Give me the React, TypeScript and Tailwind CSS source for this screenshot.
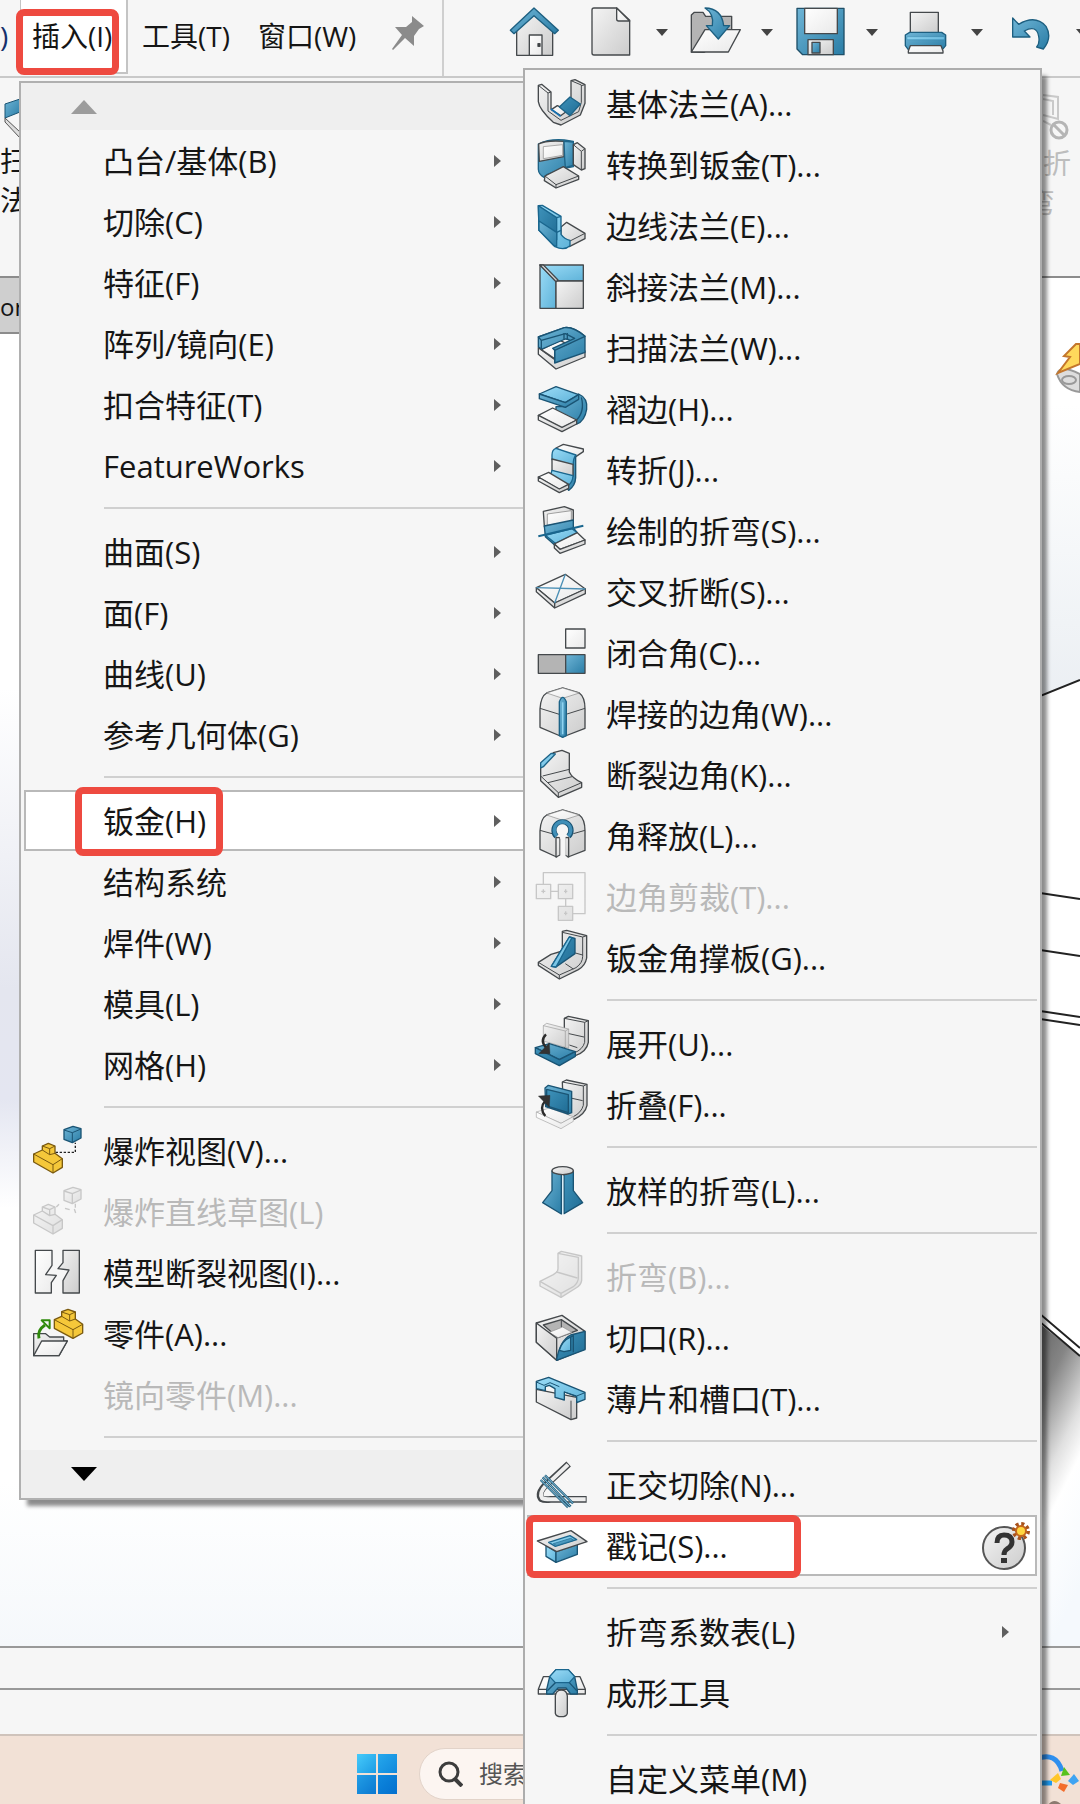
import { clsx } from "clsx";

type Shape = [fill: string, d: string, stroke?: string, width?: number, dash?: string];

const INK = "#45494c";
const GREEN = "#2f8a0b";

const paint: Record<string, string> = {
  n: "none",
  w: "url(#paper)",
  g: "url(#steel)",
  m: "#b4b4b4",
  b: "url(#blue)",
  d: "url(#deep)",
  l: "url(#sky)",
  y: "#f5c83a",
  k: "#333333",
  bg: "#f6f6f6",
};

// every icon is drawn on a 150 x 150 grid
const icons: Record<string, Shape[]> = {
  home: [
    ["g", "M20 66 72 18 128 66V145H20Z"],
    ["b", "M1 70 72 3 145 70 134 80 72 26 12 80Z", "#1d5f80"],
    ["w", "M58 84H96V145H58Z"],
    ["k", "M84 110H90V118H84Z"],
  ],
  file: [
    ["g", "M24 3H92L131 40V144H24Q18 144 18 138V9Q18 3 24 3Z"],
    ["w", "M92 3V36Q92 42 98 42H131Z"],
  ],
  open: [
    ["m", "M1 135V24L10 16H36L44 28H122V72L40 136Z"],
    ["w", "M1 135 42 68H148L112 135Z"],
    ["b", "M42 3Q92 4 98 56H116L82 96 46 56H64Q70 20 42 3Z", "#1d5f80"],
  ],
  save: [
    ["b", "M3 4H144V143H20L3 126Z", "#1f4f68"],
    ["w", "M26 4H124V80H26Z"],
    ["g", "M36 98H112V143H36Z"],
    ["b", "M48 106H72V138H48Z"],
  ],
  print: [
    ["g", "M28 16H112V78H28Z"],
    ["b", "M13 84 26 76H122L134 84V116L124 128H22L13 116Z", "#1d5f80"],
    ["l", "M18 90H130V98H18Z", "#2d7fa8", 1],
    ["w", "M22 132 28 116H120L126 132V138H22Z"],
  ],
  undo: [
    ["b", "M20 33V90H72L55 72Q92 52 98 88Q102 108 92 120L112 126Q140 92 120 58Q88 22 38 52Z", "#1d5f80"],
  ],
  baseFlange: [
    ["g", "M7 19 17 16 45 39V90L75 108 105 68V5L117 2 147 17V73L133 108 75 138 52 130Q10 92 7 68Z"],
    ["n", "M7 19 36 42V96L75 124 128 98 136 70V18L105 5M36 42 45 39M136 20 147 17", INK, 3],
    ["w", "M46 92 64 80 96 94 74 110Z"],
    ["d", "M70 84 102 54 133 75 102 110Z", "#1d6387"],
    ["n", "M45 90 74 112", "#1673b5", 5],
  ],
  convert: [
    ["b", "M7 12Q40 -4 85 0L112 4V80L90 84 32 104 24 112Q8 104 7 88Z", "#1d6387"],
    ["g", "M8 12Q30 0 84 4V50L10 64Z"],
    ["w", "M22 20 80 14V46L22 56Z", "#8a8a8a", 2],
    ["b", "M84 4 112 6V76L88 82 86 54Z", "#1d6387"],
    ["g", "M112 14 124 8 147 26V86L136 90 112 74Z"],
    ["n", "M136 34V90M112 14 136 34 147 26", INK, 3],
    ["g", "M27 108 82 80 128 108V118L60 144 25 122Z"],
    ["n", "M27 108 60 134 128 108M60 134V144", INK, 3],
  ],
  edgeFlange: [
    ["g", "M75 78 92 64 147 97V113L100 137 75 110Z"],
    ["n", "M147 97 102 120", INK, 3],
    ["l", "M7 14 19 13 75 46V100Q85 114 102 118V134Q85 150 57 137L9 88Z", "#1a668e"],
    ["d", "M7 14 62 50V116Q26 92 9 88Z", "#1a668e"],
    ["b", "M9 60 62 94V136L54 134 9 88Z", "#1a668e"],
    ["n", "M62 94 75 88M62 50 75 46", "#1a668e"],
  ],
  miter: [
    ["l", "M12 9H142V57H62Z"],
    ["l", "M12 9 60 57V139H12Z"],
    ["g", "M60 57H142V139H60Z"],
    ["g", "M12 9H22L66 54 60 59Z"],
  ],
  sweptFlange: [
    ["g", "M7 74 60 112 147 84V102L60 138 7 94Z"],
    ["w", "M16 80 72 52 108 70 60 110Z"],
    ["b", "M7 42 85 14Q112 10 147 40V88L56 120V80L104 60Q104 48 88 48L18 78 7 72Z", "#1a5474"],
    ["b", "M7 42 85 14Q112 10 147 40L56 82 50 76 116 46 88 32 16 52Z", "#1a5474"],
    ["n", "M16 52V78M56 80V120M84 30V50M94 30V50", "#1a5474"],
  ],
  hem: [
    ["b", "M60 68 90 68 128 30Q156 42 152 76Q146 112 122 120L98 100 60 84Z", "#1a5474"],
    ["n", "M136 40Q148 84 118 112", "#1a5474"],
    ["l", "M10 30 60 8 128 32 88 56Z", "#1a5474"],
    ["b", "M10 30 88 56 128 32V46L88 70 10 44Z", "#1a5474"],
    ["w", "M7 94 50 72 122 108 78 132Z"],
    ["g", "M7 94 78 130 122 108V120L78 143 7 108Z"],
  ],
  jog: [
    ["w", "M60 9 82 -2 142 12V20L115 38Z"],
    ["b", "M110 44 119 32V98Q118 122 98 136L88 124Q110 110 110 90Z", "#1a5474"],
    ["l", "M48 30Q48 14 60 10L120 30Q111 40 112 60L48 44Z", "#1a668e"],
    ["g", "M48 42 111 58V94L48 78Z"],
    ["l", "M48 76 111 92Q110 112 96 122L40 92Q46 88 48 76Z", "#1a668e"],
    ["w", "M7 96 38 82 98 118 70 134Z"],
    ["g", "M7 96 70 132 98 118V130L70 143 7 108Z"],
  ],
  sketchedBend: [
    ["g", "M22 16 85 2 112 12V50L25 62Z"],
    ["w", "M34 24 106 14V46L34 58Z", "#777777", 2],
    ["b", "M25 60 112 42V66L124 80 55 116 28 92Z", "#1a5474"],
    ["l", "M28 88 108 68 124 80 58 112Z", "#1a668e"],
    ["n", "M7 91 142 59", "#1a668e", 6],
    ["w", "M55 114 124 80 147 102 72 130Z"],
    ["g", "M55 114 72 130 147 102V114L72 142 55 126Z"],
  ],
  crossBreak: [
    ["w", "M1 62 88 22 148 66 56 108Z"],
    ["g", "M1 62 56 108 148 66V80L56 123 1 74Z"],
    ["n", "M56 108V122"],
    ["n", "M1 62 148 66M88 22 56 108", "#4a8fb5", 4],
  ],
  closedCorner: [
    ["w", "M89 3H147V60H89Z"],
    ["m", "M7 80H89V136H7Z"],
    ["b", "M89 80H147V136H89Z"],
  ],
  weldedCorner: [
    ["g", "M12 60Q14 22 32 12L80 -3 130 12Q147 24 147 60V118L80 144 12 115Z"],
    ["w", "M32 12 80 -3 130 12 80 28Z", "#888888", 2],
    ["n", "M12 58 70 76M90 76 147 58", INK, 3],
    ["b", "M70 38Q80 12 91 38V140L80 145 70 140Z", "#1d6387"],
    ["n", "M80 40V136", "#8fd3f0", 5],
  ],
  breakCorner: [
    ["g", "M14 50 52 8 78 1 100 10V66Q108 84 137 98V112L67 142 14 92Z"],
    ["n", "M20 78 100 58M36 98 108 80M67 128 137 98M14 78 67 128V142", INK, 3],
    ["l", "M14 38 46 10 58 12 22 50 14 54Z", "#1d6387"],
  ],
  cornerRelief: [
    ["g", "M12 60Q14 22 32 12L80 -3 130 12Q147 24 147 60V118L96 138V80H62V138L12 115Z"],
    ["w", "M32 12 80 -3 130 12 80 28Z", "#888888", 2],
    ["n", "M12 58 48 68M112 68 147 58", INK, 3],
    ["g", "M60 80H72V132L60 138ZM86 80H98V138L86 132Z"],
    ["bg", "M70 72H88V140H74V72Z", "#f6f6f6", 1],
    ["bg", "M62 76A25 25 0 1 1 97 76", "#1a5474", 17],
    ["n", "M62 75A25 25 0 1 1 97 75", "#3f8fb8", 10],
    ["bg", "M68 70A17 17 0 1 1 90 70L85 84H74Z", "#f6f6f6", 1],
  ],
  trim: [
    ["n", "M22 37V2H147V125H110M44 58H67M89 80V103"],
    ["g", "M1 37H44V80H1ZM67 37H110V80H67ZM67 103H110V145H67Z"],
    ["n", "M16 58H28M22 52V64M84 58H94M89 52V64M84 124H94M89 118V130"],
  ],
  gusset: [
    ["g", "M79 -5 92 -8 152 8V75Q148 98 127 110L70 138 7 97V88L45 64 79 54Z"],
    ["n", "M7 88 70 126 120 104Q140 90 140 70V12L79 -2M140 12 152 8M70 126V138M88 92 112 108M118 60 140 66", INK, 3],
    ["d", "M46 100 100 12 117 16V62L60 102Z", "#1a5474"],
    ["l", "M46 100 100 12 108 14 60 102Z", "#1a668e"],
  ],
  unfold: [
    ["g", "M85 -2 97 -8 157 5V70Q152 98 118 110L85 95Z"],
    ["n", "M146 10V70Q140 92 114 102M85 -2 146 10 157 5M90 42 144 54M100 78 124 86", INK, 3],
    ["g", "M22 20 32 13 98 30V88L22 66Z", "#9a9a9a", 2],
    ["n", "M22 20 88 36V88M88 36 98 30", "#9a9a9a", 2],
    ["b", "M-2 86 40 74 118 98 70 122Z", "#1a5474"],
    ["d", "M-2 86 70 122 118 98V112L70 140 -2 104Z", "#1a5474"],
    ["n", "M30 46Q10 66 32 88", "#2b2b2b", 7],
    ["k", "M8 104 40 72 42 104Z", "#2b2b2b", 1],
  ],
  fold: [
    ["g", "M79 6 91 0 153 13V76Q148 102 114 118L82 95Z"],
    ["n", "M142 18V76Q136 98 112 110M79 6 142 18 153 13M104 54 140 62", INK, 3],
    ["w", "M1 96 40 84 112 110 75 130Z", "#a5a5a5", 2],
    ["w", "M1 96 75 130 112 110V124L75 146 1 112Z", "#a5a5a5", 2],
    ["b", "M27 24 37 16 107 34V98L97 102 29 80Z", "#1a5474"],
    ["d", "M32 28 97 44V98L32 78Z", "#1a5474"],
    ["n", "M28 108Q8 84 28 62", "#2b2b2b", 7],
    ["k", "M7 48 42 46 40 82Z", "#2b2b2b", 1],
  ],
  loftedBend: [
    ["b", "M48 15V74L20 110 76 144V24Z", "#1a5474"],
    ["d", "M84 24 112 15V74L140 110 84 143Z", "#1a5474"],
    ["g", "M48 14A32 12 0 1 0 112 14A32 12 0 1 0 48 14Z"],
    ["n", "M80 30V144", "#d8edf7", 4],
  ],
  bend: [
    ["g", "M66 4 76 -2 137 12V85Q135 100 120 108L75 136 12 102V88L52 68Q66 60 66 50Z"],
    ["n", "M12 88 75 124 112 104Q127 92 127 78V16L66 4M62 60 124 78M75 124V136"],
  ],
  rip: [
    ["g", "M1 30 78 7 147 55V108L62 142 1 88Z"],
    ["m", "M22 36 76 20 124 52 66 74Z"],
    ["w", "M40 58 80 42 108 58 66 74Z", "#8c8c8c", 2],
    ["n", "M76 20V42M1 30 62 78", INK, 3],
    ["g", "M1 30 62 76V142L1 88Z"],
    ["d", "M62 140Q72 82 104 66L147 55V110L62 142Z", "#1a5474"],
    ["l", "M70 112Q78 84 104 72V112L84 116Z", "#1a5474"],
    ["n", "M104 72 112 68V118", "#1a5474"],
  ],
  tabSlot: [
    ["g", "M1 46 122 70V132L105 137 1 84Z"],
    ["n", "M105 80V137", INK, 3],
    ["l", "M1 22 38 10 147 55V76L122 86V68L85 54V78L57 70V44L40 34 28 38V50L1 44Z", "#1a5474"],
    ["n", "M1 24 24 34 42 26 70 38M85 54 122 66 147 56", "#1a5474", 3],
  ],
  normalCut: [
    ["n", "M98 12 30 74Q4 100 16 116 24 120 44 118H152", INK, 20],
    ["n", "M96 14 30 76Q8 100 18 114 24 118 44 118H149", "#eeeeee", 12],
    ["n", "M27 46 111 130M20 52 104 140M14 60 96 142", "#25607d", 7],
    ["n", "M27 46 111 130M20 52 104 140M14 60 96 142", "#87c0dc", 3],
  ],
  stamp: [
    ["l", "M30 74 60 92V124L30 106Z", "#1a5474"],
    ["b", "M60 92 124 70V100L60 124Z", "#1a5474"],
    ["g", "M4 60 105 29 153 62 62 92Z"],
    ["l", "M38 64 102 44 122 56 58 76Z", "#1a668e"],
    ["b", "M52 68 104 52 114 58 62 74Z", "#1a668e", 2],
  ],
  forming: [
    ["w", "M22 26H132L148 64V78H7V64Z"],
    ["n", "M7 64H148"],
    ["b", "M41 26 60 5H97L116 26 124 66V78H104L90 60H66L50 78H32V64Z", "#1a5474"],
    ["l", "M41 26 60 5H97L116 26 100 44H58Z", "#1a668e"],
    ["n", "M58 44 34 68M100 44 122 68", "#1a5474"],
    ["g", "M58 84Q60 66 76 66Q92 66 94 84V136Q92 146 76 146Q60 146 58 136Z"],
  ],
  explode: [
    ["y", "M2 84 28 72V60L46 52 66 60V82L88 98V124L60 141 2 108Z", "#7a5a10"],
    ["n", "M2 84 60 116 88 98M60 116V141M28 72 50 86 66 82M28 60 50 68 66 60M50 68V86", "#7a5a10", 3],
    ["n", "M68 79H127V50", "#222222", 4, "7 5"],
    ["b", "M93 11 120 1 144 8V36L118 50 93 40Z", "#1a5474"],
    ["n", "M93 12 118 20 144 9M118 20V50", "#1a5474", 3],
  ],
  explodeLine: [
    ["g", "M2 84 28 72V60L46 52 66 60V82L88 98V124L60 141 2 108Z"],
    ["n", "M2 84 60 116 88 98M60 116V141M28 72 50 86 66 82M28 60 50 68 66 60M50 68V86"],
    ["n", "M70 60 78 52M96 64 110 68M124 66 128 78M127 50V62"],
    ["g", "M93 11 120 1 144 8V36L118 50 93 40Z"],
    ["n", "M93 12 118 20 144 9M118 20V50"],
  ],
  breakView: [
    ["w", "M7 7H57V52L38 80 70 82 55 104V135H7Z"],
    ["g", "M90 7H139V135H90V98L108 66 75 62 90 44Z"],
  ],
  part: [
    ["g", "M2 74V140H78L103 96H92V84H50L38 74Z"],
    ["w", "M2 140 26 96H103L78 140Z"],
    ["n", "M18 88Q12 64 36 48", GREEN, 9],
    ["n", "M26 34H50V58Z", GREEN, 6],
    ["y", "M64 32 86 22V8L105 1 127 9V30L149 46V72L120 88 64 58Z", "#7a5a10"],
    ["n", "M64 32 120 62 149 46M120 62V88M86 22 110 36 127 30M86 9 110 17 127 9M110 17V36", "#7a5a10", 3],
  ],
};

function Icon({ name, muted = false }: { name: string; muted?: boolean }) {
  return (
    <svg
      viewBox="0 0 150 150"
      className={clsx("h-[50px] w-[50px] shrink-0 overflow-visible", muted && "opacity-50")}
      aria-hidden="true"
    >
      {icons[name].map(([fill, d, stroke, width, dash], i) => (
        <path
          key={i}
          d={d}
          fill={paint[fill]}
          stroke={stroke ?? (muted ? "#9a9a9a" : INK)}
          strokeWidth={width ?? 4}
          strokeDasharray={dash}
          strokeLinejoin="round"
        />
      ))}
    </svg>
  );
}

function Gradients() {
  const stops: [string, string, string][] = [
    ["paper", "#ffffff", "#e9e9e9"],
    ["steel", "#f4f4f4", "#cccccc"],
    ["blue", "#6fb5d6", "#2a7da6"],
    ["deep", "#3f93bb", "#1f6c94"],
    ["sky", "#9bdcf7", "#5fb3d9"],
  ];
  return (
    <svg className="absolute h-0 w-0" aria-hidden="true">
      <defs>
        {stops.map(([id, from, to]) => (
          <linearGradient key={id} id={id} x1="0" y1="0" x2="1" y2="1">
            <stop offset="0" stopColor={from} />
            <stop offset="1" stopColor={to} />
          </linearGradient>
        ))}
      </defs>
    </svg>
  );
}

interface Item {
  label: string;
  icon?: string;
  sub?: boolean;
  off?: boolean;
  active?: boolean;
  mark?: string;
  help?: boolean;
}

const insertMenu: Item[][] = [
  [
    { label: "凸台/基体(B)", sub: true },
    { label: "切除(C)", sub: true },
    { label: "特征(F)", sub: true },
    { label: "阵列/镜向(E)", sub: true },
    { label: "扣合特征(T)", sub: true },
    { label: "FeatureWorks", sub: true },
  ],
  [
    { label: "曲面(S)", sub: true },
    { label: "面(F)", sub: true },
    { label: "曲线(U)", sub: true },
    { label: "参考几何体(G)", sub: true },
  ],
  [
    { label: "钣金(H)", sub: true, active: true, mark: "left-[49px] w-[148px] -top-[5px] -bottom-[7px]" },
    { label: "结构系统", sub: true },
    { label: "焊件(W)", sub: true },
    { label: "模具(L)", sub: true },
    { label: "网格(H)", sub: true },
  ],
  [
    { label: "爆炸视图(V)...", icon: "explode" },
    { label: "爆炸直线草图(L)", icon: "explodeLine", off: true },
    { label: "模型断裂视图(I)...", icon: "breakView" },
    { label: "零件(A)...", icon: "part" },
    { label: "镜向零件(M)...", off: true },
  ],
];

const sheetMetalMenu: Item[][] = [
  [
    { label: "基体法兰(A)...", icon: "baseFlange" },
    { label: "转换到钣金(T)...", icon: "convert" },
    { label: "边线法兰(E)...", icon: "edgeFlange" },
    { label: "斜接法兰(M)...", icon: "miter" },
    { label: "扫描法兰(W)...", icon: "sweptFlange" },
    { label: "褶边(H)...", icon: "hem" },
    { label: "转折(J)...", icon: "jog" },
    { label: "绘制的折弯(S)...", icon: "sketchedBend" },
    { label: "交叉折断(S)...", icon: "crossBreak" },
    { label: "闭合角(C)...", icon: "closedCorner" },
    { label: "焊接的边角(W)...", icon: "weldedCorner" },
    { label: "断裂边角(K)...", icon: "breakCorner" },
    { label: "角释放(L)...", icon: "cornerRelief" },
    { label: "边角剪裁(T)...", icon: "trim", off: true },
    { label: "钣金角撑板(G)...", icon: "gusset" },
  ],
  [
    { label: "展开(U)...", icon: "unfold" },
    { label: "折叠(F)...", icon: "fold" },
  ],
  [{ label: "放样的折弯(L)...", icon: "loftedBend" }],
  [
    { label: "折弯(B)...", icon: "bend", off: true },
    { label: "切口(R)...", icon: "rip" },
    { label: "薄片和槽口(T)...", icon: "tabSlot" },
  ],
  [
    { label: "正交切除(N)...", icon: "normalCut" },
    { label: "戳记(S)...", icon: "stamp", active: true, help: true, mark: "-left-[3px] w-[275px] -top-[2px] -bottom-[4px]" },
  ],
  [
    { label: "折弯系数表(L)", sub: true },
    { label: "成形工具", icon: "forming" },
  ],
  [{ label: "自定义菜单(M)" }],
];

function RedMark({ className }: { className: string }) {
  return (
    <span
      className={clsx("pointer-events-none absolute rounded-lg border-[7px] border-[#ee4a40]", className)}
    />
  );
}

function HelpBadge() {
  return (
    <svg width="50" height="50" viewBox="0 0 50 50" className="mr-1 ml-auto" aria-hidden="true">
      <circle cx="23" cy="27" r="21" fill="url(#steel)" stroke="#555" strokeWidth="2" />
      <path d="M16 22Q16 14 23 14 31 14 31 21 31 25 26 28 23 30 23 34" fill="none" stroke="#333" strokeWidth="5" />
      <path d="M20 37h6v5h-6z" fill="#333" />
      <circle cx="40" cy="10" r="7" fill="none" stroke="#a8521c" strokeWidth="4" strokeDasharray="3 2.5" />
      <circle cx="40" cy="10" r="5" fill="#ffd640" stroke="#c4661c" strokeWidth="2" />
    </svg>
  );
}

function MenuRow({ item }: { item: Item }) {
  return (
    <li>
      <button
        type="button"
        disabled={item.off}
        className={clsx(
          "relative flex h-[61px] w-full items-center gap-5 border-2 pl-[7px] text-left text-[31px] leading-10 whitespace-nowrap",
          item.active ? "border-[#b9b9b9] bg-white" : "border-transparent",
          item.off ? "text-[#b9b9b9]" : "text-[#151515]",
        )}
      >
        {item.icon ? <Icon name={item.icon} muted={item.off} /> : <span className="w-[50px] shrink-0" />}
        <span>{item.label}</span>
        {item.sub && (
          <svg width="7" height="12" viewBox="0 0 7 12" className="mr-[26px] ml-auto" aria-hidden="true">
            <path d="M0 0 7 6 0 12Z" fill="#5f5f5f" />
          </svg>
        )}
        {item.help && <HelpBadge />}
        {item.mark && <RedMark className={item.mark} />}
      </button>
    </li>
  );
}

function MenuGroups({ groups }: { groups: Item[][] }) {
  return (
    <>
      {groups.map((group, i) => (
        <ul key={i}>
          {i > 0 && <li className="mt-[11px] mb-3 ml-20 h-[2px] bg-[#d0d0d0]" />}
          {group.map((item) => (
            <MenuRow key={item.label} item={item} />
          ))}
        </ul>
      ))}
    </>
  );
}

function Caret() {
  return (
    <button type="button" aria-label="更多" className="ml-5 w-3 shrink-0">
      <svg width="12" height="7" viewBox="0 0 12 7" aria-hidden="true">
        <path d="M0 0H12L6 7Z" fill="#444" />
      </svg>
    </button>
  );
}

function TitleBar() {
  return (
    <header className="flex h-[78px] shrink-0 overflow-hidden border-b-2 border-[#c9c9c9] bg-[#f6f6f6] text-[28px]">
      <nav className="flex shrink-0 items-start border-r-2 border-[#cfcfcf] leading-[72px]">
        <span className="w-5 shrink-0 text-[#16306b]">)</span>
        <button type="button" className="relative w-[108px] border-r-2 border-b-2 border-l border-[#c4c4c4] bg-white pl-[11px] text-left">
          插入(I)
          <RedMark className="top-[9px] -left-[5px] h-[66px] w-[103px]" />
        </button>
        <button type="button" className="w-[116px] pl-[14px] text-left">工具(T)</button>
        <button type="button" className="w-32 pl-[14px] text-left">窗口(W)</button>
        <button type="button" aria-label="固定" className="w-[70px] pt-4 pl-5">
          <svg width="32" height="34" viewBox="0 0 32 34" aria-hidden="true">
            <path d="M20 0 32 10 27 13 22 20 22 30 13 22 1 34 0 33 10 19 3 11 14 11 20 6Z" fill="#8b8b8b" />
          </svg>
        </button>
      </nav>
      <div className="flex items-center pb-3 pl-[66px]">
        <button type="button" aria-label="主页" className="mr-[26px]">
          <Icon name="home" />
        </button>
        {["file", "open", "save", "print", "undo"].map((name) => (
          <div key={name} className="flex w-[105px] shrink-0 items-center">
            <button type="button" aria-label={name}>
              <Icon name={name} />
            </button>
            <Caret />
          </div>
        ))}
      </div>
    </header>
  );
}

function Ribbon() {
  return (
    <div className="flex h-[198px] shrink-0 justify-between overflow-hidden bg-[#f6f6f6] text-[28px] leading-[39px]">
      <div className="flex flex-col items-start pt-4">
        <svg width="20" height="48" viewBox="0 0 20 48" aria-hidden="true">
          <path d="M5 10 20 5V18L5 24Z" fill="url(#blue)" stroke="#1a5474" />
          <path d="M5 24 20 38V44L5 28Z" fill="#ddd" stroke="#555" />
        </svg>
        <span>扫</span>
        <span>法</span>
      </div>
      <div className="flex w-10 flex-col items-end pt-[15px] pr-[9px] text-[#bdbdbd]">
        <svg width="28" height="51" viewBox="0 0 28 51" aria-hidden="true">
          <path d="M0 2 15 4V26L0 22M0 6 10 8V22M0 28 8 32" fill="none" stroke="#c9c9c9" strokeWidth="2" />
          <circle cx="16" cy="37" r="8" fill="none" stroke="#b5b5b5" strokeWidth="3" />
          <path d="M10 31 22 43" stroke="#b5b5b5" strokeWidth="3" />
        </svg>
        <span>折</span>
        <span className="pr-4">弯</span>
      </div>
    </div>
  );
}

// edges and shaded face of the part, seen beside the open menus
function ModelView() {
  return (
    <svg width="40" height="1368" viewBox="0 0 40 1368" className="shrink-0" aria-hidden="true">
      <defs>
        <linearGradient id="face" x1="0" y1="0" x2="0.25" y2="1">
          <stop offset="0" stopColor="#666" />
          <stop offset="0.22" stopColor="#858585" />
          <stop offset="0.48" stopColor="#e0e0e0" />
          <stop offset="0.62" stopColor="#fff" />
          <stop offset="1" stopColor="#f5f9fd" />
        </linearGradient>
        <linearGradient id="backdrop" x1="0" y1="0" x2="0" y2="1">
          <stop offset="0.3" stopColor="#fff" />
          <stop offset="1" stopColor="#ebeff3" />
        </linearGradient>
      </defs>
      <path d="M0 0H40V403L0 418Z" fill="url(#backdrop)" />
      <path d="M0 418 40 403V1074L0 1040Z" fill="#fff" />
      <path d="M0 1046 40 1078V1368H0Z" fill="url(#face)" />
      <path d="M0 418 40 402M0 615 40 621M0 672 40 678M0 733 40 739M0 741 40 747M0 1036 40 1070M0 1044 40 1078" stroke="#222" strokeWidth="2" fill="none" />
      <path d="M17 96Q20 86 40 96V114Q22 112 17 96Z" fill="#ddd" stroke="#999" strokeWidth="2" />
      <ellipse cx="29" cy="102" rx="7" ry="4" fill="none" stroke="#999" strokeWidth="2" />
      <path d="M36 66 24 78 30 79 18 95 40 86V66Z" fill="#ffd95c" stroke="#c4762c" strokeWidth="2" />
    </svg>
  );
}

function Taskbar() {
  return (
    <footer className="flex h-[71px] shrink-0 items-center justify-between border-t-2 border-[#cfc3bb] bg-[#f2e1d6]">
      <div className="flex items-center pt-[6px] pl-[357px]">
        <button type="button" aria-label="开始" className="grid grid-cols-2 gap-[2px]">
          <span className="h-[19px] w-[19px] bg-linear-to-br from-[#46cbfa] to-[#1b9be4]" />
          <span className="h-[19px] w-[19px] bg-linear-to-br from-[#26a8ec] to-[#1088dc]" />
          <span className="h-[19px] w-[19px] bg-linear-to-br from-[#229ee6] to-[#0b78d0]" />
          <span className="h-[19px] w-[19px] bg-linear-to-br from-[#0f88de] to-[#0470ce]" />
        </button>
        <label className="ml-[22px] flex h-[52px] w-60 items-center gap-4 rounded-full border border-[#e2d3c9] bg-[#fcf5f1] pl-[18px]">
          <svg width="25" height="26" viewBox="0 0 25 26" aria-hidden="true">
            <circle cx="11" cy="11" r="9" fill="none" stroke="#3c3c3c" strokeWidth="3" />
            <path d="M17 18 24 25" stroke="#3c3c3c" strokeWidth="4" />
          </svg>
          <input
            type="search"
            placeholder="搜索"
            aria-label="搜索"
            className="w-32 bg-transparent text-2xl outline-none placeholder:text-[#555]"
          />
        </label>
      </div>
      <svg width="44" height="60" viewBox="0 0 44 60" className="mt-2" aria-hidden="true">
        <path d="M0 14Q20 6 26 26" fill="none" stroke="#2f8fee" strokeWidth="5" />
        <path d="M0 38H16" stroke="#1f9bf0" strokeWidth="5" />
        <path d="M28 22 34 30 25 31Z" fill="#57c21d" />
        <path d="M32 36 38 29 43 36 37 40Z" fill="#3fa4f2" />
        <path d="M22 28 25 34 20 38 14 35Z" fill="#ffc629" />
        <path d="M24 38 32 40 28 47 22 43Z" fill="#f36d2c" />
        <path d="M12 60Q18 52 26 60Z" fill="#8c7a70" />
      </svg>
    </footer>
  );
}

export default function App() {
  return (
    <div className="relative flex min-h-screen w-full flex-col overflow-hidden bg-white font-['Open_Sans','Noto_Sans_CJK_SC',sans-serif] text-[#151515]">
      <Gradients />
      <TitleBar />
      <Ribbon />

      <main className="flex flex-1 items-start justify-between border-t-2 border-[#8c8c8c] bg-[linear-gradient(180deg,#fff_0%,#fff_30%,#e4e6ef_52%,#e4e6f1_60%,#fff_68%,#fff_88%,#f5f8fb_100%)]">
        <div className="h-14 border-b-2 border-[#8c8c8c] bg-[#cfcfcf] text-2xl leading-[58px]">or</div>
        <ModelView />
      </main>

      <div className="h-[42px] shrink-0 border-t-2 border-[#999] bg-[#f6f6f6]" />
      <div className="h-[46px] shrink-0 border-t-2 border-[#999] bg-[#f6f6f6]" />
      <Taskbar />

      <div className="absolute top-[81px] left-[19px] w-[512px] border-2 border-[#b0b0b0] bg-[#f6f6f6] shadow-[8px_6px_4px_rgba(0,0,0,0.45)]">
        <button type="button" aria-label="向上滚动" className="block h-[47px] w-full bg-[#efefef] pl-[50px]">
          <svg width="26" height="14" viewBox="0 0 26 14" aria-hidden="true">
            <path d="M0 14 13 0 26 14Z" fill="#9c9c9c" />
          </svg>
        </button>
        <div className="pl-[3px]">
          <MenuGroups groups={insertMenu} />
          <div className="mt-[11px] mb-3 ml-20 h-[2px] bg-[#d0d0d0]" />
        </div>
        <button type="button" aria-label="向下滚动" className="block h-[48px] w-full bg-[#efefef] pl-[50px]">
          <svg width="26" height="14" viewBox="0 0 26 14" aria-hidden="true">
            <path d="M0 0H26L13 14Z" fill="#000" />
          </svg>
        </button>
      </div>

      <div className="absolute top-[68px] left-[523px] w-[519px] border-2 border-[#adadad] bg-[#f6f6f6] py-[3px] pr-[3px] pl-[2px] shadow-[5px_8px_4px_rgba(0,0,0,0.45)]">
        <MenuGroups groups={sheetMetalMenu} />
      </div>
    </div>
  );
}
